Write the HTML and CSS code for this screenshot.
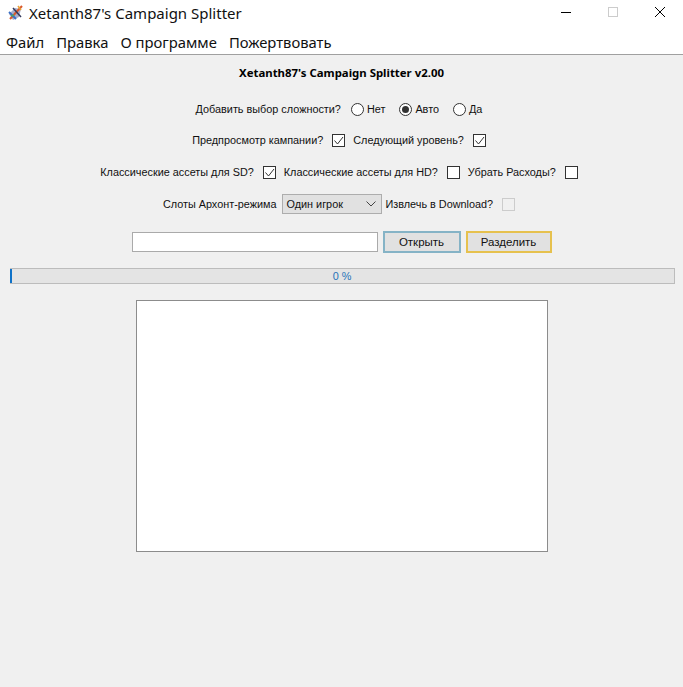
FILE: index.html
```html
<!DOCTYPE html>
<html lang="ru">
<head>
<meta charset="utf-8">
<title>Xetanth87's Campaign Splitter</title>
<link rel="stylesheet" href="styles.css">
</head>
<body>
<div class="window">
  <header class="titlebar">
    <svg class="app-icon" width="16" height="16" viewBox="0 0 16 16">
      <path d="M1 9l6-6 6 1-2 8-6 3z" fill="#a9aecb"/>
      <path d="M2 14L14 1" stroke="#d9572b" stroke-width="2"/>
      <path d="M1 7l7 7" stroke="#3a6fc4" stroke-width="2"/>
      <path d="M5 3l8 9" stroke="#333a5c" stroke-width="1.5"/>
      <path d="M10 1l3 4" stroke="#e8a23a" stroke-width="1.5"/>
      <path d="M3 11l3-1" stroke="#48a56a" stroke-width="1.5"/>
    </svg>
    <span class="app-title">Xetanth87's Campaign Splitter</span>
    <div class="win-controls">
      <span class="win-btn"><svg width="10" height="10" viewBox="0 0 10 10"><path d="M0 5.5h10" stroke="#000" stroke-width="1"/></svg></span>
      <span class="win-btn"><svg width="10" height="10" viewBox="0 0 10 10"><rect x="0.5" y="0.5" width="9" height="9" fill="none" stroke="#ccc"/></svg></span>
      <span class="win-btn"><svg width="10" height="10" viewBox="0 0 10 10"><path d="M0 0l10 10M10 0L0 10" stroke="#000" stroke-width="1"/></svg></span>
    </div>
  </header>
  <nav class="menubar">
    <span>Файл</span><span>Правка</span><span>О программе</span><span>Пожертвовать</span>
  </nav>
  <main class="content">
    <h1 class="heading">Xetanth87's Campaign Splitter v2.00</h1>
    <div class="row row-1">
      <span>Добавить выбор сложности?</span>
      <span class="radio-item first"><i class="radio"></i>Нет</span>
      <span class="radio-item"><i class="radio on"></i>Авто</span>
      <span class="radio-item"><i class="radio"></i>Да</span>
    </div>
    <div class="row row-2">
      <span>Предпросмотр кампании?</span><i class="check"><svg width="13" height="13" viewBox="0 0 13 13"><path d="M2.5 6.5l3 3.5 5.5-7" fill="none" stroke="#333" stroke-width="1"/></svg></i>
      <span class="gap-l">Следующий уровень?</span><i class="check"><svg width="13" height="13" viewBox="0 0 13 13"><path d="M2.5 6.5l3 3.5 5.5-7" fill="none" stroke="#333" stroke-width="1"/></svg></i>
    </div>
    <div class="row row-3">
      <span>Классические ассеты для SD?</span><i class="check"><svg width="13" height="13" viewBox="0 0 13 13"><path d="M2.5 6.5l3 3.5 5.5-7" fill="none" stroke="#333" stroke-width="1"/></svg></i>
      <span class="gap-l">Классические ассеты для HD?</span><i class="check"></i>
      <span class="gap-l">Убрать Расходы?</span><i class="check"></i>
    </div>
    <div class="row row-4">
      <span>Слоты Архонт-режима</span>
      <span class="select">Один игрок<svg width="10" height="6" viewBox="0 0 10 6"><path d="M0.5 0.5L5 5l4.5-4.5" fill="none" stroke="#444"/></svg></span>
      <span>Извлечь в Download?</span><i class="check disabled"></i>
    </div>
    <div class="row row-5">
      <span class="input"></span>
      <span class="btn btn-blue">Открыть</span>
      <span class="btn btn-yellow">Разделить</span>
    </div>
    <div class="progress"><span class="progress-fill"></span><span class="progress-text">0 %</span></div>
    <div class="output"></div>
  </main>
</div>
</body>
</html>
```
FILE: styles.css
```css
* { box-sizing: border-box; }
html, body { margin: 0; height: 100%; }
body { background: #f0f0f0; font-family: "Liberation Sans", "Noto Sans", sans-serif; color: #111; overflow: hidden; }
.window { display: flex; flex-direction: column; height: 687px; }
.titlebar { height: 30px; background: #fff; display: flex; align-items: center; padding: 0 0 4px 8px; flex: none; }
.app-icon { margin-right: 5px; }
.app-title { font-family: "Noto Sans", sans-serif; font-size: 15px; color: #111; }
.win-controls { margin-left: auto; display: flex; }
.win-btn { width: 47px; height: 26px; display: flex; align-items: center; justify-content: center; margin-top: -2px; }
.menubar { height: 25px; background: #fff; border-bottom: 1px solid #a0a0a0; display: flex; gap: 12px; padding: 0 0 1px 6px; align-items: center; font-family: "Noto Sans", sans-serif; font-size: 14.8px; flex: none; }
.content { flex: 1; display: flex; flex-direction: column; align-items: center; padding-top: 11px; font-size: 10.85px; }
.heading { margin: 0; font-family: "Noto Sans", sans-serif; font-size: 11.4px; font-weight: 700; line-height: 14px; color: #000; }
.row { display: flex; align-items: center; height: 16px; white-space: nowrap; }
.row-1 { margin: 21px 5px 0 0; }
.row-2 { margin: 15px 5px 0 0; }
.row-3 { margin: 16px 5px 0 0; }
.row-4 { margin: 14px 5px 0 0; height: 20px; }
.row-5 { margin-top: 17px; height: 22px; }
.radio-item { display: flex; align-items: center; gap: 3px; margin-left: 14px; }
.radio-item.first { margin-left: 10px; }
.radio { width: 13px; height: 13px; border: 1px solid #333; border-radius: 50%; background: #fff; display: block; }
.radio.on::after { content: ""; display: block; width: 7px; height: 7px; background: #333; border-radius: 50%; margin: 2px; }
.check { width: 13px; height: 13px; border: 1px solid #333; background: #fff; display: block; margin-left: 9px; flex: none; }
.check svg { display: block; margin: -1px; }
.check.disabled { border-color: #ccc; background: #f0f0f0; }
.gap-l { margin-left: 8px; }
.select { width: 100px; height: 20px; background: #e1e1e1; border: 1px solid #adadad; margin: 0 4px 0 5px; padding: 0 5px 0 4px; display: flex; align-items: center; justify-content: space-between; }
.input { width: 246px; height: 20px; background: #fff; border: 1px solid #aaa; }
.btn { height: 22px; width: 78px; background: #e1e1e1; display: flex; align-items: center; justify-content: center; margin-left: 5px; border: 2px solid; font-size: 11.5px; }
.btn-blue { border-color: #85b3c6; }
.btn-yellow { border-color: #e6c14e; width: 86px; }
.progress { margin: 15px 0 0 1px; width: 665px; height: 16px; background: #e4e4e4; border: 1px solid #bcbcbc; position: relative; display: flex; align-items: center; justify-content: center; color: #2673b8; }
.progress-fill { position: absolute; left: -1px; top: 0; bottom: 0; width: 2px; background: #0f72c8; }
.output { margin-top: 16px; width: 412px; height: 252px; background: #fff; border: 1px solid #8c8c8c; }
```
